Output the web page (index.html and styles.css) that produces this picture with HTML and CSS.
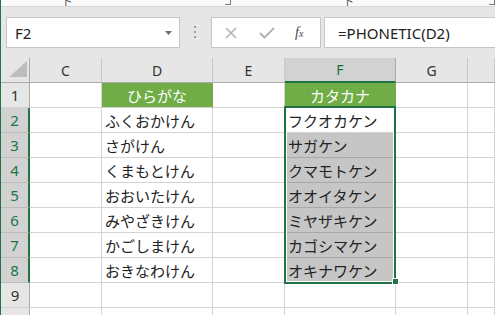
FILE: index.html
```html
<!DOCTYPE html>
<html lang="ja">
<head>
    <meta charset="UTF-8">
    <title>PHONETIC</title>
    <link rel="stylesheet" href="styles.css">
</head>
<body>
<div class="app">
    <div class="ribbon">
        <span class="rb-label rb-clip">クリップボード</span>
        <span class="rb-launch"></span>
        <span class="rb-label rb-font">フォント</span>
        <span class="rb-launch rb-launch2"></span>
    </div>

    <div class="fbar">
        <div class="namebox">
            <span>F2</span>
            <svg width="7" height="4" viewBox="0 0 7 4"><path d="M0 0h7L3.5 4z" fill="#707070"/></svg>
        </div>
        <div class="dots">
            <svg width="3" height="13" viewBox="0 0 3 13"><rect x="0" y="0" width="2" height="2" fill="#9a9a9a"/><rect x="0" y="5" width="2" height="2" fill="#9a9a9a"/><rect x="0" y="10" width="2" height="2" fill="#9a9a9a"/></svg>
        </div>
        <div class="fbtns">
            <svg width="12" height="12" viewBox="0 0 12 12"><path d="M1 1l10 10M11 1L1 11" stroke="#b4b4b4" stroke-width="1.6"/></svg>
            <svg width="16" height="12" viewBox="0 0 16 12"><path d="M1 6l4.5 4.5L15 1" stroke="#b4b4b4" stroke-width="2" fill="none"/></svg>
            <span class="fx"><i>f</i><i class="x">x</i></span>
        </div>
        <div class="finput">=PHONETIC(D2)</div>
    </div>

    <div class="sheet">
        <div class="hd corner">
            <svg width="18" height="16" viewBox="0 0 18 16"><path d="M18 0V16H0z" fill="#bdbdbd"/></svg>
        </div>
        <div class="hd">C</div>
        <div class="hd">D</div>
        <div class="hd">E</div>
        <div class="hd hd-sel">F</div>
        <div class="hd">G</div>
        <div class="hd"></div>

        <div class="rh">1</div>
        <div class="c"></div><div class="c title">ひらがな</div><div class="c"></div><div class="c title">カタカナ</div><div class="c"></div><div class="c"></div>

        <div class="rh rh-sel">2</div>
        <div class="c"></div><div class="c">ふくおかけん</div><div class="c"></div><div class="c">フクオカケン</div><div class="c"></div><div class="c"></div>

        <div class="rh rh-sel">3</div>
        <div class="c"></div><div class="c">さがけん</div><div class="c"></div><div class="c pick">サガケン</div><div class="c"></div><div class="c"></div>

        <div class="rh rh-sel">4</div>
        <div class="c"></div><div class="c">くまもとけん</div><div class="c"></div><div class="c pick">クマモトケン</div><div class="c"></div><div class="c"></div>

        <div class="rh rh-sel">5</div>
        <div class="c"></div><div class="c">おおいたけん</div><div class="c"></div><div class="c pick">オオイタケン</div><div class="c"></div><div class="c"></div>

        <div class="rh rh-sel">6</div>
        <div class="c"></div><div class="c">みやざきけん</div><div class="c"></div><div class="c pick">ミヤザキケン</div><div class="c"></div><div class="c"></div>

        <div class="rh rh-sel">7</div>
        <div class="c"></div><div class="c">かごしまけん</div><div class="c"></div><div class="c pick">カゴシマケン</div><div class="c"></div><div class="c"></div>

        <div class="rh rh-sel">8</div>
        <div class="c"></div><div class="c">おきなわけん</div><div class="c"></div><div class="c pick">オキナワケン</div><div class="c"></div><div class="c"></div>

        <div class="rh">9</div>
        <div class="c"></div><div class="c"></div><div class="c"></div><div class="c"></div><div class="c"></div><div class="c"></div>

        <div class="rh">10</div>
        <div class="c"></div><div class="c"></div><div class="c"></div><div class="c"></div><div class="c"></div><div class="c"></div>

        <div class="sel"></div>
        <div class="handle"></div>
    </div>
</div>
</body>
</html>
```

FILE: styles.css
```css
body {
    margin: 0;
    width: 495px;
    height: 315px;
    overflow: hidden;
    font-family: "Noto Sans", "Noto Sans CJK JP", sans-serif;
    background: #ffffff;
}
.app {
    border-left: 1px solid #217346;
    height: 315px;
}

/* ribbon remnant at the very top */
.ribbon {
    height: 6px;
    overflow: hidden;
    background: #fafafa;
    border-bottom: 1px solid #d8d8d8;
    display: flex;
    align-items: flex-end;
    font-size: 11px;
    color: #555;
    line-height: 14px;
}
.rb-label {
    margin-bottom: -3px;
}
.rb-clip {
    margin-left: 61px;
}
.rb-launch {
    width: 6px;
    height: 6px;
    margin-left: 90px;
    border-right: 1px solid #777;
    border-bottom: 1px solid #777;
    box-sizing: border-box;
    margin-bottom: 1px;
}
.rb-font {
    margin-left: 112px;
}
.rb-launch2 {
    margin-left: 104px;
}

/* formula bar */
.fbar {
    background: #e6e6e6;
    height: 51px;
    box-sizing: border-box;
    padding: 10px 0 10px 5px;
    display: flex;
    align-items: stretch;
}
.namebox {
    width: 174px;
    background: #fff;
    border: 1px solid #c6c6c6;
    box-sizing: border-box;
    display: flex;
    align-items: center;
    justify-content: space-between;
    padding: 0 7px 0 8px;
    font-size: 15px;
    color: #222;
}
.dots {
    width: 31px;
    display: flex;
    align-items: center;
    justify-content: center;
}
.fbtns {
    width: 110px;
    background: #fff;
    border: 1px solid #c6c6c6;
    box-sizing: border-box;
    display: flex;
    align-items: center;
    padding-left: 13px;
    gap: 22px;
}
.fx {
    font-family: "Liberation Serif", serif;
    font-size: 14px;
    color: #444;
    margin-left: -2px;
}
.fx .x {
    font-size: 10px;
}
.finput {
    flex: 1;
    margin-left: 3px;
    background: #fff;
    border: 1px solid #c6c6c6;
    border-right: none;
    box-sizing: border-box;
    display: flex;
    align-items: center;
    padding-left: 13px;
    font-size: 15px;
    color: #222;
}

/* sheet grid */
.sheet {
    position: relative;
    display: grid;
    grid-template-columns: 29px 72px 111px 72px 111px 72px 1fr;
    grid-auto-rows: 25px;
    font-size: 15px;
}
.hd {
    background: #e6e6e6;
    border-right: 1px solid #c8c8c8;
    border-bottom: 1px solid #ababab;
    box-sizing: border-box;
    display: flex;
    align-items: center;
    justify-content: center;
    font-size: 14px;
    color: #333;
}
.corner {
    align-items: flex-end;
    justify-content: flex-end;
    padding: 0 2px 5px 0;
    border-right-color: #ababab;
}
.hd-sel {
    background: #d2d2d2;
    border-bottom: 2px solid #217346;
    border-right-color: #ababab;
    color: #1d6b40;
}
.rh {
    background: #e6e6e6;
    border-right: 1px solid #ababab;
    border-bottom: 1px solid #d0d0d0;
    box-sizing: border-box;
    display: flex;
    align-items: center;
    justify-content: center;
    color: #333;
}
.rh-sel {
    background: #d2d2d2;
    border-right: 2px solid #217346;
    border-bottom-color: #bcbcbc;
    color: #217346;
}
.c {
    border-right: 1px solid #d4d4d4;
    border-bottom: 1px solid #d4d4d4;
    box-sizing: border-box;
    display: flex;
    align-items: center;
    padding-left: 3px;
    font-family: "Noto Sans CJK JP", sans-serif;
    color: #222;
    white-space: nowrap;
    overflow: hidden;
}
.title {
    background: #70ad47;
    color: #fff;
    justify-content: center;
    padding-left: 0;
    border-right-color: #70ad47;
}
.pick {
    background: #c6c6c6;
    border-bottom-color: #a8a8a8;
}

/* selection frame over F2:F8 */
.sel {
    position: absolute;
    left: 283px;
    top: 48px;
    width: 112px;
    height: 178px;
    border: 2px solid #217346;
    box-sizing: border-box;
    box-shadow: inset 0 0 0 1px #fff;
}
.handle {
    position: absolute;
    left: 391px;
    top: 220px;
    width: 7px;
    height: 7px;
    background: #217346;
    border: 1px solid #fff;
    box-sizing: border-box;
}
```
